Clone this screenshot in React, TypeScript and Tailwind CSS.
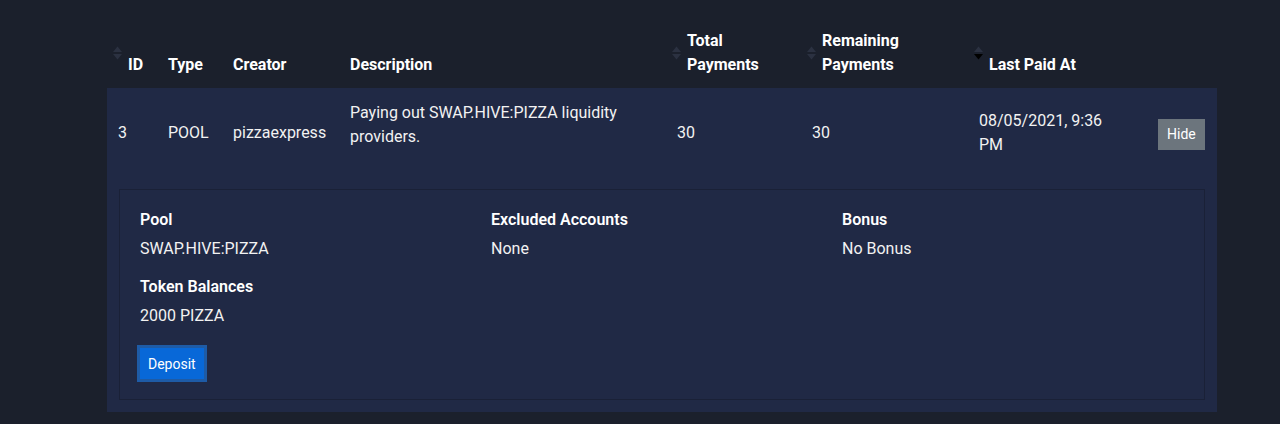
const SortIcon = ({ active }: { active?: boolean }) => (
  <svg
    width="9"
    height="14"
    viewBox="0 0 9 14"
    className="absolute left-[6px] top-1/2 -translate-y-1/2"
  >
    <polygon points="0,6 4.5,0.5 9,6" fill="#2b3141" />
    <polygon points="0,8 9,8 4.5,13.5" fill={active ? "#000000" : "#2b3141"} />
  </svg>
);

const columns = [
  { label: "ID", sort: true },
  { label: "Type" },
  { label: "Creator" },
  { label: "Description" },
  { label: "Total Payments", sort: true },
  { label: "Remaining Payments", sort: true },
  { label: "Last Paid At", sort: true, active: true },
  { label: "" },
];

const details = [
  { title: "Excluded Accounts", value: "None" },
  { title: "Bonus", value: "No Bonus" },
];

export default function App() {
  return (
    <div className="min-h-[424px] bg-[#1b202c] pt-[17px] font-['Roboto',sans-serif] text-base text-white">
      <table className="ml-[107px] w-[1110px] table-fixed border-collapse">
        <colgroup>
          <col className="w-[50px]" />
          <col className="w-[65px]" />
          <col className="w-[117px]" />
          <col className="w-[327px]" />
          <col className="w-[135px]" />
          <col className="w-[167px]" />
          <col className="w-[179px]" />
          <col className="w-[70px]" />
        </colgroup>
        <thead>
          <tr>
            {columns.map((c, i) => (
              <th
                key={i}
                className={`relative pb-[11px] pt-3 pr-[11px] text-left align-bottom font-bold leading-6 ${
                  c.sort ? "pl-[21px]" : "pl-[11px]"
                } ${c.label === "Total Payments" ? "pr-[40px]" : ""} ${
                  c.label === "Remaining Payments" ? "pr-[60px]" : ""
                }`}
              >
                {c.sort && <SortIcon active={c.active} />}
                {c.label}
              </th>
            ))}
          </tr>
        </thead>
        <tbody className="bg-[#202945]">
          <tr className="leading-6 text-[#f2f2f2]">
            <td className="px-[11px] pb-3 pt-[13px] align-middle">3</td>
            <td className="px-[11px] pb-3 pt-[13px] align-middle">POOL</td>
            <td className="px-[11px] pb-3 pt-[13px] align-middle">pizzaexpress</td>
            <td className="px-[11px] pb-3 pt-[13px] align-middle">
              <p className="mb-4">Paying out SWAP.HIVE:PIZZA liquidity providers.</p>
            </td>
            <td className="px-[11px] pb-3 pt-[13px] align-middle">30</td>
            <td className="px-[11px] pb-3 pt-[13px] align-middle">30</td>
            <td className="px-[11px] pb-3 pt-[13px] align-middle">
              <div className="w-[135px]">08/05/2021, 9:36 PM</div>
            </td>
            <td className="pb-3 pl-[11px] pr-3 pt-[15px] align-middle">
              <button className="h-[31px] rounded-none bg-[#6c757d] px-[9px] text-sm text-white">
                Hide
              </button>
            </td>
          </tr>
          <tr>
            <td colSpan={8} className="p-3">
              <div className="border border-[#1a2137] px-5 pb-5 pt-5">
                <div className="grid grid-cols-[351px_351px_1fr]">
                  <div>
                    <div className="mb-2 font-semibold leading-[1.2]">Pool</div>
                    <div className="mb-4 leading-6 text-[#f2f2f2]">SWAP.HIVE:PIZZA</div>
                    <div className="mb-2 font-semibold leading-[1.2]">Token Balances</div>
                    <div className="mb-5 leading-6 text-[#f2f2f2]">2000 PIZZA</div>
                    <button className="h-[31px] rounded-none bg-[#0868d8] px-2 text-sm text-white shadow-[0_0_0_3px_#1e5ba6]">
                      Deposit
                    </button>
                  </div>
                  {details.map((d) => (
                    <div key={d.title}>
                      <div className="mb-2 font-semibold leading-[1.2]">{d.title}</div>
                      <div className="leading-6 text-[#f2f2f2]">{d.value}</div>
                    </div>
                  ))}
                </div>
              </div>
            </td>
          </tr>
        </tbody>
      </table>
    </div>
  );
}
